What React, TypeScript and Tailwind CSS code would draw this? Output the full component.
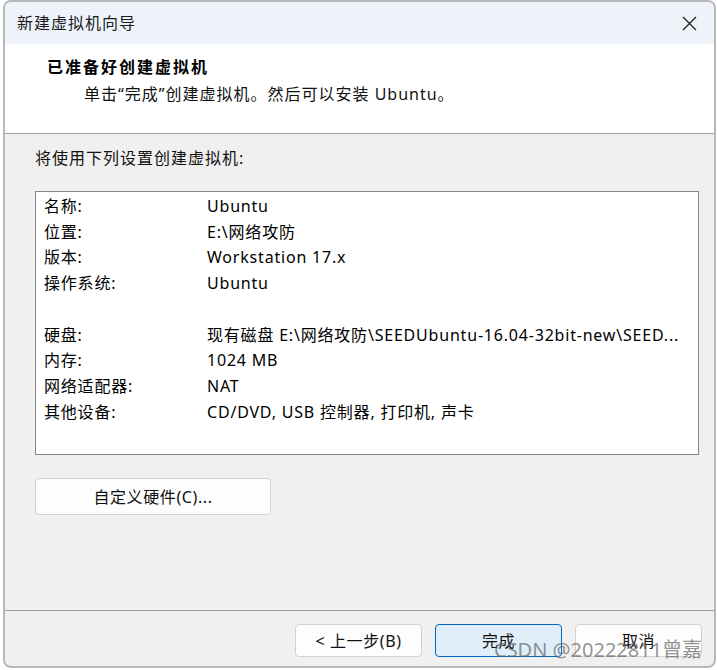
import React from "react";

const FONT = '"Noto Sans", "Noto Sans CJK SC", sans-serif';

const rows: [string, string][] = [
  ["名称:", "Ubuntu"],
  ["位置:", "E:\\网络攻防"],
  ["版本:", "Workstation 17.x"],
  ["操作系统:", "Ubuntu"],
  ["", ""],
  ["硬盘:", "现有磁盘 E:\\网络攻防\\SEEDUbuntu-16.04-32bit-new\\SEED..."],
  ["内存:", "1024 MB"],
  ["网络适配器:", "NAT"],
  ["其他设备:", "CD/DVD, USB 控制器, 打印机, 声卡"],
];

export default function App() {
  return (
    <div
      className="relative w-[717px] h-[670px] bg-white overflow-hidden text-[#000]"
      style={{ fontFamily: FONT }}
    >
      <div className="ml-[3px] w-[713px] h-[668px] rounded-[8px] border-2 border-[#b8b8b8] bg-[#f0f0f0] flex flex-col overflow-hidden">
        {/* title bar */}
        <div className="h-[42px] shrink-0 bg-[#eef2f9] flex items-center justify-between pl-[12px] pr-[16px]">
          <span className="text-[16px] tracking-[1px] text-[#1a1a1a]">新建虚拟机向导</span>
          <svg width="15" height="15" viewBox="0 0 15 15" className="mr-[1px]">
            <path d="M1 1 L14 14 M14 1 L1 14" stroke="#1a1a1a" strokeWidth="1.2" fill="none" />
          </svg>
        </div>
        {/* header */}
        <div className="h-[90px] shrink-0 bg-white border-b border-[#a0a0a0] pt-[12px]">
          <div className="pl-[42px] text-[16px] leading-[22px] font-bold tracking-[2px] text-[#000]">
            已准备好创建虚拟机
          </div>
          <div className="pl-[79px] mt-[5px] text-[16px] leading-[22px] tracking-[1px] text-[#111]">
            单击“完成”创建虚拟机。然后可以安装 Ubuntu。
          </div>
        </div>
        {/* content */}
        <div className="flex-1 pl-[30px] pt-[13px]">
          <div className="text-[16px] leading-[22px] tracking-[1px] text-[#111]">将使用下列设置创建虚拟机:</div>
          <div className="mt-[22px] w-[664px] h-[264px] bg-white border border-[#868686] pt-[1px]">
            {rows.map(([k, v], i) => (
              <div key={i} className="flex h-[25.75px] items-center text-[16px] tracking-[0.8px] text-[#000]">
                <div className="w-[171px] pl-[8px] shrink-0">{k}</div>
                <div className="whitespace-nowrap">{v}</div>
              </div>
            ))}
          </div>
          <button className="mt-[23px] w-[236px] h-[37px] rounded-[4px] border border-[#d0d0d0] bg-[#fdfdfd] text-[16px] tracking-[0.6px] text-[#111] flex items-center justify-center">
            自定义硬件(C)...
          </button>
        </div>
        {/* footer */}
        <div className="h-[56px] shrink-0 border-t border-[#a0a0a0] flex justify-end items-start pt-[13px] pr-[12px] gap-[13px]">
          <button className="w-[127px] h-[33px] rounded-[4px] border border-[#d0d0d0] bg-[#fdfdfd] text-[16px] tracking-[0.6px] text-[#111] flex items-center justify-center">
            &lt; 上一步(B)
          </button>
          <button className="w-[127px] h-[33px] rounded-[4px] border border-[#0067c0] bg-[#e0eef9] text-[16px] tracking-[0.6px] text-[#111] flex items-center justify-center">
            完成
          </button>
          <button className="w-[127px] h-[33px] rounded-[4px] border border-[#d0d0d0] bg-[#fdfdfd] text-[16px] tracking-[0.6px] text-[#111] flex items-center justify-center">
            取消
          </button>
        </div>
      </div>
      <div className="absolute left-[494px] top-[638px] text-[20px] leading-[24px] text-[rgba(100,100,100,0.7)] whitespace-nowrap">
        CSDN @20222811曾嘉
      </div>
    </div>
  );
}
